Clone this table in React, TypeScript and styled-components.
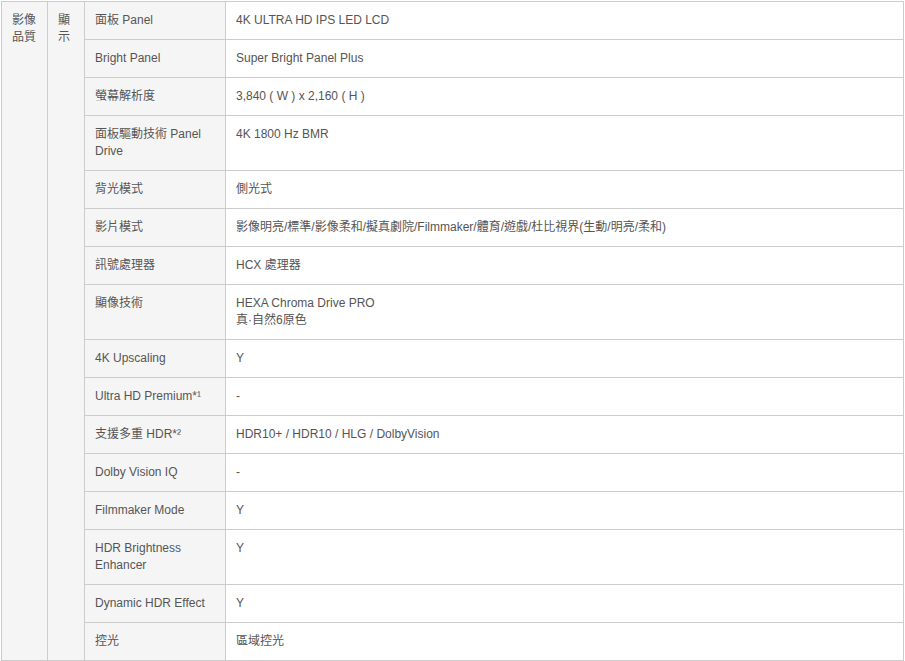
import * as React from 'react';
import styled, { createGlobalStyle } from 'styled-components';

interface SpecRow {
    label: React.ReactNode;
    value: React.ReactNode;
}

interface CellProps {
    shaded?: boolean;
}

const GlobalStyle = createGlobalStyle`
    html, body {
        margin: 0;
        padding: 0;
        background: #ffffff;
    }
`;

const Page = styled.div`
    padding: 1px 0 0 1px;
`;

const SpecTable = styled.table`
    width: 903px;
    border-collapse: collapse;
    table-layout: fixed;
    font-family: 'Liberation Sans', Arial, 'Noto Sans CJK TC', sans-serif;
    font-size: 12px;
    line-height: 17px;
    color: #555555;
`;

const Cell = styled.td<CellProps>`
    border: 1px solid #cccccc;
    padding: 10px;
    vertical-align: top;
    text-align: left;
    background-color: ${props => (props.shaded ? '#f5f5f5' : '#ffffff')};
`;

// footnote marker, e.g. *¹
const Mark = styled.span`
    font-size: 12px;
`;

const rows: SpecRow[] = [
    { label: '面板 Panel', value: '4K ULTRA HD IPS LED LCD' },
    { label: 'Bright Panel', value: 'Super Bright Panel Plus' },
    { label: '螢幕解析度', value: '3,840 ( W ) x 2,160 ( H )' },
    { label: '面板驅動技術 Panel Drive', value: '4K 1800 Hz BMR' },
    { label: '背光模式', value: '側光式' },
    {
        label: '影片模式',
        value: '影像明亮/標準/影像柔和/擬真劇院/Filmmaker/體育/遊戲/杜比視界(生動/明亮/柔和)',
    },
    { label: '訊號處理器', value: 'HCX 處理器' },
    {
        label: '顯像技術',
        value: (
            <>
                HEXA Chroma Drive PRO
                <br />
                真·自然6原色
            </>
        ),
    },
    { label: '4K Upscaling', value: 'Y' },
    {
        label: (
            <>
                Ultra HD Premium<Mark>*¹</Mark>
            </>
        ),
        value: '-',
    },
    {
        label: (
            <>
                支援多重 HDR<Mark>*²</Mark>
            </>
        ),
        value: 'HDR10+ / HDR10 / HLG / DolbyVision',
    },
    { label: 'Dolby Vision IQ', value: '-' },
    { label: 'Filmmaker Mode', value: 'Y' },
    { label: 'HDR Brightness Enhancer', value: 'Y' },
    { label: 'Dynamic HDR Effect', value: 'Y' },
    { label: '控光', value: '區域控光' },
];

export default function App() {
    return (
        <Page>
            <GlobalStyle />
            <SpecTable>
                <colgroup>
                    <col style={{ width: 46 }} />
                    <col style={{ width: 37 }} />
                    <col style={{ width: 141 }} />
                    <col />
                </colgroup>
                <tbody>
                    {rows.map((row, i) => (
                        <tr key={i}>
                            {i === 0 && (
                                <>
                                    <Cell shaded rowSpan={rows.length}>
                                        影像品質
                                    </Cell>
                                    <Cell shaded rowSpan={rows.length}>
                                        顯示
                                    </Cell>
                                </>
                            )}
                            <Cell shaded>{row.label}</Cell>
                            <Cell>{row.value}</Cell>
                        </tr>
                    ))}
                </tbody>
            </SpecTable>
        </Page>
    );
}
